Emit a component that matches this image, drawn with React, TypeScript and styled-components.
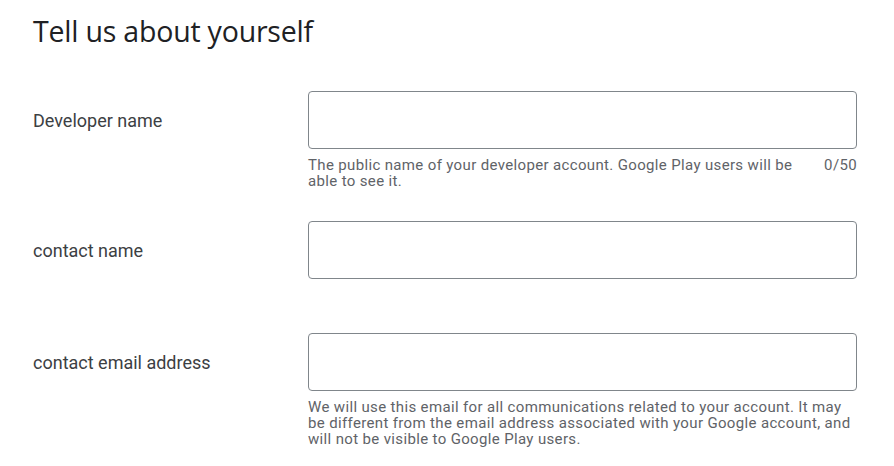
import React from "react";
import styled, { createGlobalStyle } from "styled-components";

const Global = createGlobalStyle`
  html, body { margin: 0; padding: 0; background: #fff; }
  body { font-family: Roboto, "Liberation Sans", sans-serif; color: #202124; }
`;

const Page = styled.div`
  padding: 13px 37px 0 33px;
  width: 894px;
  box-sizing: border-box;
`;

const Title = styled.h1`
  margin: 0 0 42px 0;
  font-family: "Open Sans", Roboto, sans-serif;
  font-weight: 400;
  font-size: 28.5px;
  line-height: 36px;
  color: #202124;
  letter-spacing: -0.2px;
`;

const Row = styled.div<{ $gap: number }>`
  display: grid;
  grid-template-columns: 275px 1fr;
  margin-bottom: ${(p) => p.$gap}px;
`;

const Label = styled.div`
  height: 58px;
  display: flex;
  align-items: center;
  font-size: 18px;
  color: #3c4043;
`;

const Field = styled.div`
  display: flex;
  flex-direction: column;
`;

const Input = styled.input`
  height: 58px;
  box-sizing: border-box;
  border: 1px solid #80868b;
  border-radius: 4px;
  outline: none;
  padding: 0 16px;
  font: inherit;
  background: #fff;
`;

const Hint = styled.div`
  display: flex;
  justify-content: space-between;
  gap: 24px;
  padding-top: 8px;
  font-size: 15px;
  line-height: 16px;
  color: #5f6368;
  letter-spacing: 0.35px;
`;

const HintText = styled.span<{ $w?: number }>`
  max-width: ${(p) => (p.$w ? `${p.$w}px` : "none")};
`;

export default function App() {
  return (
    <>
      <Global />
      <Page>
        <Title>Tell us about yourself</Title>
        <Row $gap={32}>
          <Label>Developer name</Label>
          <Field>
            <Input />
            <Hint>
              <HintText $w={500}>
                The public name of your developer account. Google Play users will be able to see it.
              </HintText>
              <span>0/50</span>
            </Hint>
          </Field>
        </Row>
        <Row $gap={54}>
          <Label>contact name</Label>
          <Field>
            <Input />
          </Field>
        </Row>
        <Row $gap={0}>
          <Label>contact email address</Label>
          <Field>
            <Input />
            <Hint>
              <HintText>
                We will use this email for all communications related to your account. It may be different from the email address associated with your Google account, and will not be visible to Google Play users.
              </HintText>
            </Hint>
          </Field>
        </Row>
      </Page>
    </>
  );
}
